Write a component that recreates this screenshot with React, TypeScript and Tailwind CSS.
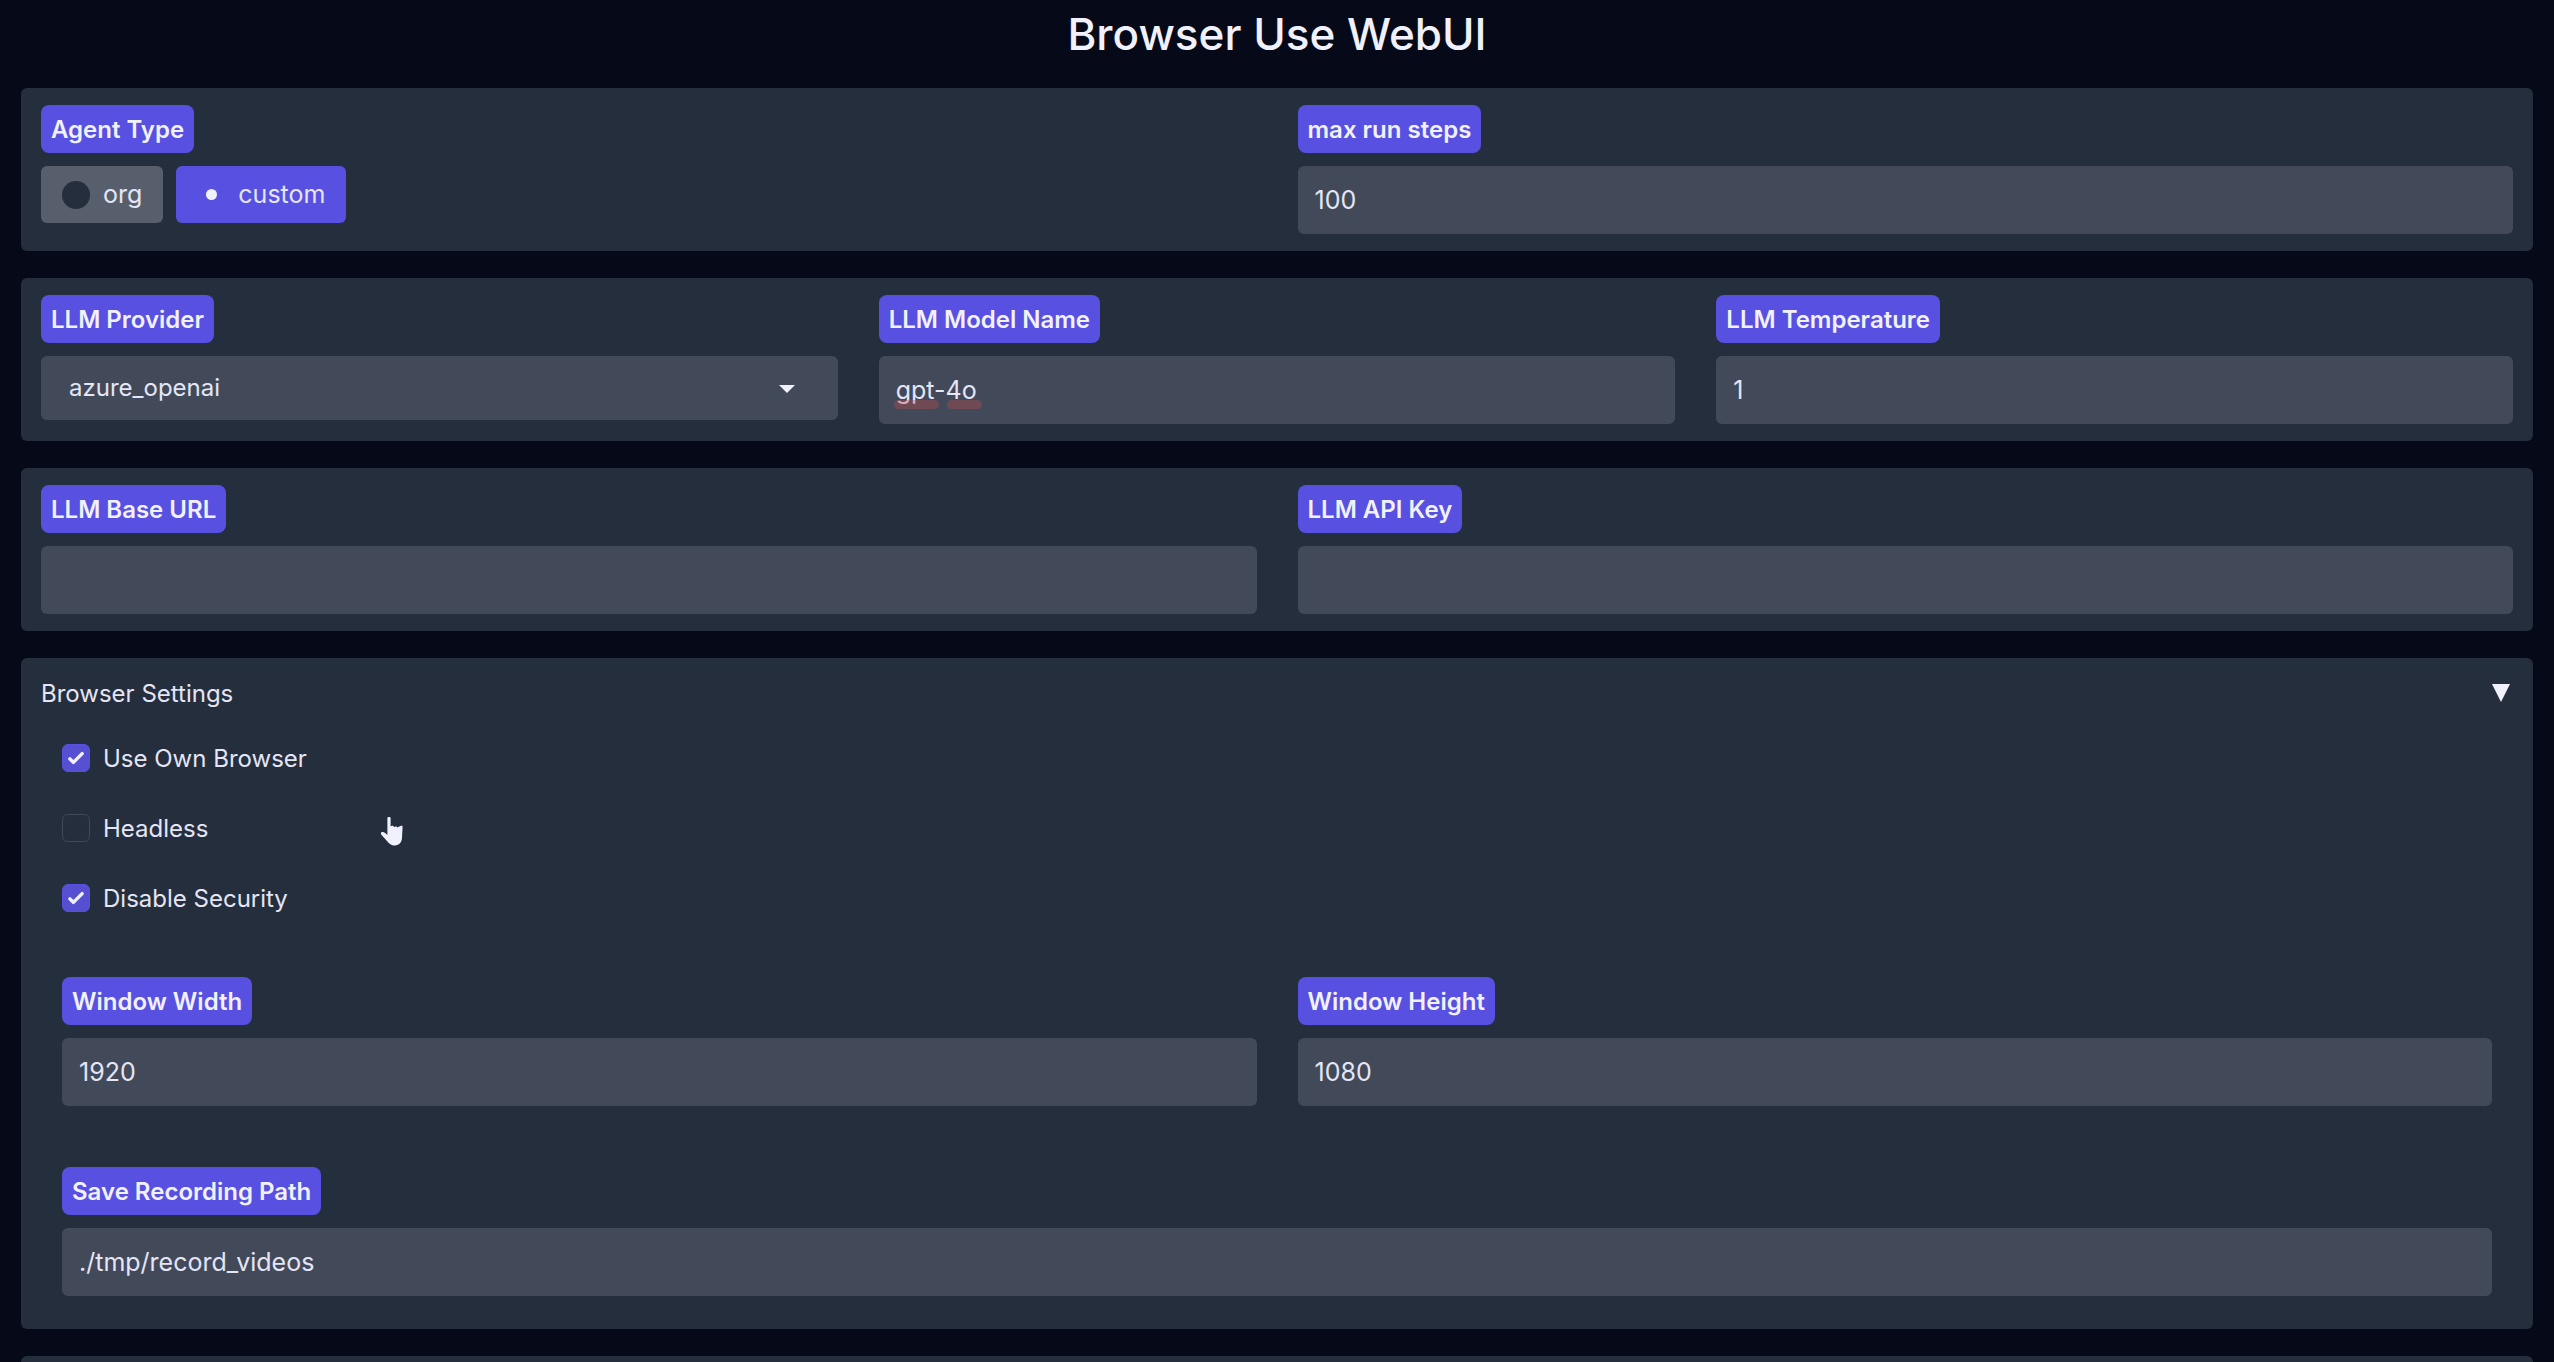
import { useState, type ReactNode } from "react";

const labelBox =
  "flex h-12 w-fit items-center rounded-lg bg-[#5850e0] px-[10px] pt-[2px] text-[24px] font-semibold whitespace-nowrap text-[#f1f1fd]";
const fieldBox =
  "h-[68px] w-full rounded-md bg-[#424a5a] px-[17px] text-[25px] text-[#e4e5f5] outline-none";

function Panel({ children }: { children?: ReactNode }) {
  return <section className="rounded-md bg-[#252e3c] px-5 py-[17px]">{children}</section>;
}

function Field({
  id,
  label,
  value = "",
  type = "text",
  children,
}: {
  id: string;
  label: string;
  value?: string;
  type?: string;
  children?: ReactNode;
}) {
  return (
    <div className="flex min-w-0 flex-1 flex-col gap-[13px]">
      <label htmlFor={id} className={labelBox}>
        {label}
      </label>
      <div className="relative">
        <input id={id} type={type} defaultValue={value} spellCheck={false} className={fieldBox} />
        {children}
      </div>
    </div>
  );
}

function AgentOption({
  value,
  checked,
  onSelect,
}: {
  value: string;
  checked: boolean;
  onSelect: () => void;
}) {
  return (
    <label
      className={
        "flex h-[57px] cursor-pointer items-center gap-[13px] rounded-md px-[21px] text-[25px] text-[#e4e5f5] " +
        (checked ? "bg-[#5850e0]" : "bg-[#585f6c]")
      }
    >
      <span className="grid place-items-center">
        <input
          type="radio"
          name="agent-type"
          value={value}
          checked={checked}
          onChange={onSelect}
          className="col-start-1 row-start-1 size-7 appearance-none rounded-full bg-[#252e3c] checked:bg-[#5850e0]"
        />
        {checked && (
          <span className="pointer-events-none col-start-1 row-start-1 size-[11px] rounded-full bg-[#f1f1fd]" />
        )}
      </span>
      {value}
    </label>
  );
}

function Check({ label, initial }: { label: string; initial: boolean }) {
  const [on, setOn] = useState(initial);
  return (
    <label className="flex h-[30px] w-fit cursor-pointer items-center gap-[13px] text-[24px] text-[#e4e5f5]">
      <span className="grid place-items-center">
        <input
          type="checkbox"
          checked={on}
          onChange={() => setOn(!on)}
          className="col-start-1 row-start-1 size-7 appearance-none rounded-md border border-[#424a5a] bg-[#252e3c] checked:border-[#5850e0] checked:bg-[#574fd2]"
        />
        {on && (
          <svg
            viewBox="0 0 16 16"
            className="pointer-events-none col-start-1 row-start-1 size-7 fill-[#f1f1fd]"
            aria-hidden="true"
          >
            <path d="M12.207 4.793a1 1 0 0 1 0 1.414l-5 5a1 1 0 0 1-1.414 0l-2-2a1 1 0 0 1 1.414-1.414L6.5 9.086l4.293-4.293a1 1 0 0 1 1.414 0z" />
          </svg>
        )}
      </span>
      <span className="pt-[2px]">{label}</span>
    </label>
  );
}

export default function App() {
  const [agent, setAgent] = useState("custom");
  const [open, setOpen] = useState(true);

  return (
    <div className="h-screen overflow-hidden bg-[#060a18] px-[21px] font-['Inter',sans-serif] text-[#e4e5f5]">
      <h1 className="flex h-[88px] items-start justify-center pt-1 text-[44px] leading-[60px] font-medium text-[#f1f1fd]">
        Browser Use WebUI
      </h1>

      <main className="flex flex-col gap-[27px]">
        <Panel>
          <div className="flex gap-[41px]">
            <fieldset className="min-w-0 flex-1">
              <legend className={labelBox}>Agent Type</legend>
              <div className="mt-[13px] flex gap-[13px]">
                {["org", "custom"].map((v) => (
                  <AgentOption key={v} value={v} checked={agent === v} onSelect={() => setAgent(v)} />
                ))}
              </div>
            </fieldset>
            <Field id="steps" label="max run steps" value="100" />
          </div>
        </Panel>

        <Panel>
          <div className="flex gap-[41px]">
            <div className="flex min-w-0 flex-1 flex-col gap-[13px]">
              <label htmlFor="provider" className={labelBox}>
                LLM Provider
              </label>
              <div className="relative">
                <select
                  id="provider"
                  defaultValue="azure_openai"
                  className="h-16 w-full appearance-none rounded-md bg-[#424a5a] px-7 text-[24px] text-[#e4e5f5] outline-none"
                >
                  <option>azure_openai</option>
                  <option>openai</option>
                  <option>anthropic</option>
                </select>
                <svg
                  viewBox="0 0 16 8"
                  className="pointer-events-none absolute top-[29px] right-[43px] h-2 w-4 fill-[#f1f1fd]"
                  aria-hidden="true"
                >
                  <path d="M0 0h16L8 8z" />
                </svg>
              </div>
            </div>
            <Field id="model" label="LLM Model Name" value="gpt-4o">
              <div className="pointer-events-none absolute top-11 left-[15px] flex gap-2">
                <span className="h-[9px] w-[45px] rounded-full bg-[#c44848]/35" />
                <span className="h-[9px] w-[35px] rounded-full bg-[#c44848]/35" />
              </div>
            </Field>
            <Field id="temperature" label="LLM Temperature" value="1" />
          </div>
        </Panel>

        <Panel>
          <div className="flex gap-[41px]">
            <Field id="base-url" label="LLM Base URL" />
            <Field id="api-key" label="LLM API Key" type="password" />
          </div>
        </Panel>

        <Panel>
          <button
            type="button"
            aria-expanded={open}
            onClick={() => setOpen(!open)}
            className="flex h-9 w-full items-center justify-between pr-[3px] text-[24px]"
          >
            <span className="pt-[2px]">Browser Settings</span>
            <svg viewBox="0 0 18 18" className="size-[18px] fill-[#f1f1fd]" aria-hidden="true">
              <path d="M0 0h18L9 18z" />
            </svg>
          </button>
          {open && (
            <div className="relative px-[21px] pt-8 pb-4">
              <div className="flex flex-col gap-10">
                <Check label="Use Own Browser" initial={true} />
                <Check label="Headless" initial={false} />
                <Check label="Disable Security" initial={true} />
              </div>
              <div className="mt-16 flex gap-[41px]">
                <Field id="win-width" label="Window Width" value="1920" />
                <Field id="win-height" label="Window Height" value="1080" />
              </div>
              <div className="mt-[61px] flex">
                <Field id="record" label="Save Recording Path" value="./tmp/record_videos" />
              </div>
              <svg
                viewBox="0 0 24 30"
                className="pointer-events-none absolute top-[105px] left-[339px] h-[30px] w-6 fill-[#f1f1fd]"
                aria-hidden="true"
              >
                <path d="M7.4 1.8C7.4.6 10.6.6 10.6 1.8V10.4C11.6 9.4 13.6 9.6 14 11C15 10 17 10.2 17.6 11.6C18.4 10.6 20 10 22 9.4C22.8 10.4 22.6 12 22.4 14L22 22C21.8 26.4 19 29.4 15 29.4C11 29.4 9.4 27.8 7.2 25.2L1.6 19C.2 17.4.8 15.8 2.6 16C4.4 16.2 6 17.6 7.4 19Z" />
              </svg>
            </div>
          )}
        </Panel>

        <Panel />
      </main>
    </div>
  );
}
